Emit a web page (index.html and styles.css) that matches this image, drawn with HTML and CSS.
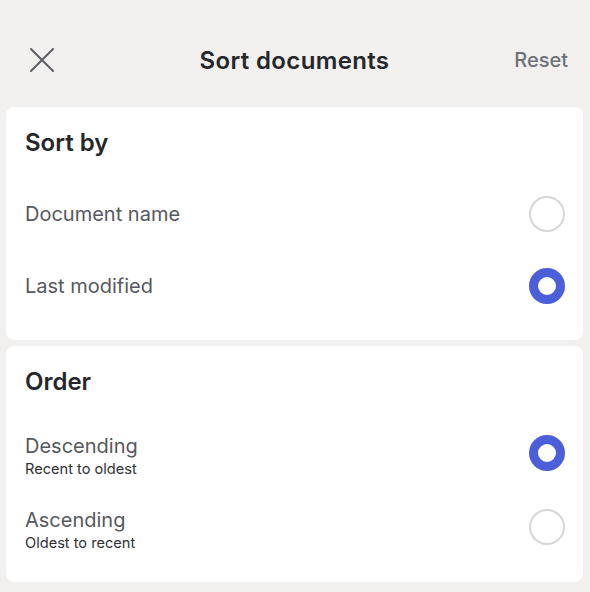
FILE: index.html
```html
<!DOCTYPE html>
<html lang="en">
<head>
<meta charset="utf-8">
<title>Sort documents</title>
<link rel="stylesheet" href="styles.css">
</head>
<body>
<div class="screen">
  <header class="topbar">
    <button class="icon-btn" aria-label="Close">
      <svg width="26" height="26" viewBox="0 0 26 26" fill="none" stroke="#5b5e64" stroke-width="2" stroke-linecap="round">
        <path d="M2 2 L24 24 M24 2 L2 24"/>
      </svg>
    </button>
    <h1 class="title">Sort documents</h1>
    <button class="reset">Reset</button>
  </header>

  <section class="card">
    <h2 class="card-title">Sort by</h2>
    <div class="row">
      <div class="label">Document name</div>
      <span class="radio"></span>
    </div>
    <div class="row">
      <div class="label">Last modified</div>
      <span class="radio checked"></span>
    </div>
  </section>

  <section class="card">
    <h2 class="card-title card-title-tight">Order</h2>
    <div class="row row-tall">
      <div class="text">
        <div class="label">Descending</div>
        <div class="sub">Recent to oldest</div>
      </div>
      <span class="radio checked"></span>
    </div>
    <div class="row row-tall">
      <div class="text">
        <div class="label">Ascending</div>
        <div class="sub">Oldest to recent</div>
      </div>
      <span class="radio"></span>
    </div>
  </section>
</div>
</body>
</html>
```

FILE: styles.css
```css
* { box-sizing: border-box; }
html, body {
  margin: 0;
  padding: 0;
  background: #f2f0ee;
  font-family: Inter, "Noto Sans", sans-serif;
}
.screen {
  width: 590px;
  padding: 0 7px 0 6px;
}
.topbar {
  display: grid;
  grid-template-columns: 1fr auto 1fr;
  align-items: center;
  height: 40px;
  margin-top: 40px;
  margin-bottom: 27px;
  padding: 0 15px;
}
.icon-btn {
  border: 0;
  background: none;
  padding: 0;
  margin-left: 8px;
  width: 26px;
  height: 26px;
  display: flex;
  justify-self: start;
}
.title {
  margin: 0;
  font-size: 24px;
  font-weight: 600;
  color: #25272b;
  letter-spacing: 0.35px;
}
.reset {
  justify-self: end;
  border: 0;
  background: none;
  padding: 0;
  font-family: inherit;
  font-size: 20px;
  font-weight: 500;
  color: #6c7078;
}
.card {
  background: #ffffff;
  border-radius: 8px;
  padding: 21px 18px 18px 19px;
  margin-bottom: 6px;
}
.card-title {
  margin: 0 0 21px 0;
  font-size: 24px;
  line-height: 29px;
  font-weight: 600;
  color: #25272b;
}
.card-title-tight {
  margin-bottom: 20px;
}
.row {
  display: flex;
  align-items: center;
  justify-content: space-between;
  height: 72px;
}
.row-tall {
  height: 74px;
}
.label {
  font-size: 20px;
  line-height: 24px;
  color: #55585e;
}
.sub {
  font-size: 14.6px;
  line-height: 20px;
  color: #2e3034;
  margin-top: 1px;
}
.text {
  padding-top: 6px;
}
.radio {
  width: 36px;
  height: 36px;
  border-radius: 50%;
  border: 2px solid #d4d6d9;
  background: #fff;
  flex: none;
}
.radio.checked {
  border: 9px solid #4b5fdb;
}
```
